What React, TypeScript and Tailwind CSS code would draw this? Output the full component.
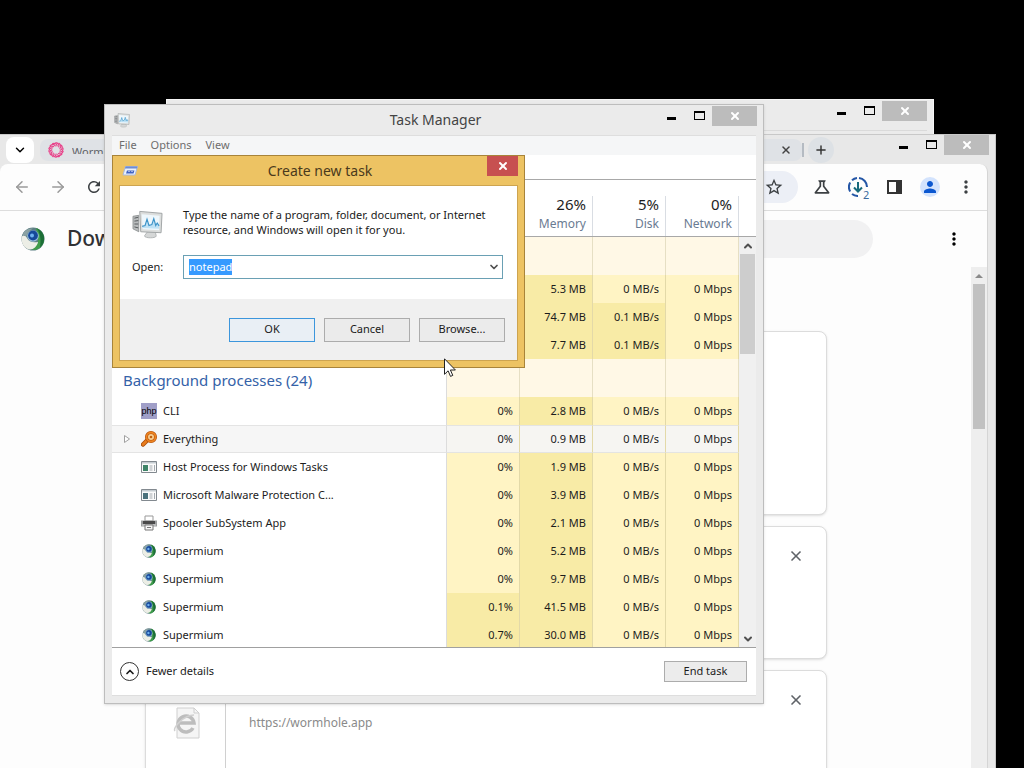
import React, { useEffect, useRef } from 'react';
import { ArrowLeft, ArrowRight, ChevronDown, ChevronUp, Plus, X } from 'lucide-react';
import { MdMoreVert, MdOutlineScience, MdPerson, MdRefresh, MdStarBorder } from 'react-icons/md';

type Row = {
  name: string;
  icon?: 'php' | 'everything' | 'host' | 'malware' | 'printer' | 'supermium';
  cpu: string;
  memory: string;
  disk: string;
  hovered?: boolean;
};

const appRows: Row[] = [
  { name: '', cpu: '', memory: '5.3 MB', disk: '0 MB/s' },
  { name: '', cpu: '', memory: '74.7 MB', disk: '0.1 MB/s' },
  { name: '', cpu: '', memory: '7.7 MB', disk: '0.1 MB/s' },
];

const backgroundRows: Row[] = [
  { name: 'CLI', icon: 'php', cpu: '0%', memory: '2.8 MB', disk: '0 MB/s' },
  { name: 'Everything', icon: 'everything', cpu: '0%', memory: '0.9 MB', disk: '0 MB/s', hovered: true },
  { name: 'Host Process for Windows Tasks', icon: 'host', cpu: '0%', memory: '1.9 MB', disk: '0 MB/s' },
  { name: 'Microsoft Malware Protection C...', icon: 'malware', cpu: '0%', memory: '3.9 MB', disk: '0 MB/s' },
  { name: 'Spooler SubSystem App', icon: 'printer', cpu: '0%', memory: '2.1 MB', disk: '0 MB/s' },
  { name: 'Supermium', icon: 'supermium', cpu: '0%', memory: '5.2 MB', disk: '0 MB/s' },
  { name: 'Supermium', icon: 'supermium', cpu: '0%', memory: '9.7 MB', disk: '0 MB/s' },
  { name: 'Supermium', icon: 'supermium', cpu: '0.1%', memory: '41.5 MB', disk: '0 MB/s' },
  { name: 'Supermium', icon: 'supermium', cpu: '0.7%', memory: '30.0 MB', disk: '0 MB/s' },
];

const SupermiumIcon = ({ className }: { className: string }) => (
  <svg viewBox="0 0 24 24" className={className}>
    <circle cx="12" cy="12" r="11.5" fill="#5d7f84" />
    <path d="M15 1a11.500 11.500 0 0 1 0 22c-3 0-5-1-6-2 6-1 9-5 8-10z" fill="#3f9c4b" />
    <path d="M16 1.500c5 2 8 7 7 12-.5 3-2 5-4 7 1-6 1-13-3-19z" fill="#1c6e36" />
    <path d="M.6 10C2 8 4 8 6 11c2 4 6 5 11 4-1 5-5 8-9 7.400C3 21 0 16 .6 10z" fill="#eceee6" />
    <path d="M3 5C6 2 9 1 12 1.500 9 3 6 6 5.500 9.500 4 8 2.500 8 1.500 8z" fill="#8aa1a3" />
    <circle cx="12" cy="9" r="5.800" fill="#9cc0dd" />
    <circle cx="12" cy="8.500" r="4.900" fill="#16489a" />
    <circle cx="11" cy="8.500" r="2" fill="#6fb1ef" />
  </svg>
);

const MonitorIcon = ({ className }: { className: string }) => (
  <svg viewBox="0 0 32 32" className={className}>
    <path d="M1 8l6-1v17l-6-3z" fill="#b9bcbd" stroke="#85898b" strokeWidth=".8" />
    <path d="M2.500 10l4-1M2.500 13l4-.5M2.500 16h4M2.500 19l4 1" stroke="#55595b" />
    <path d="M16 24h8l1 4c1 3-13 3-12 0z" fill="#d5d7d7" stroke="#a5a8a9" strokeWidth=".8" />
    <path d="M8 3l23 2-1 20-21-1z" fill="#dcdedd" stroke="#a0a4a5" />
    <path d="M10 6l18.500 1.500-.7 15L11 21.500z" fill="#eef7fc" />
    <path d="M10.500 19l3-1 2-7 2 7 3-1 2-6 2 7 1.500-3 2 3v3l-17-1z" fill="#bfe2f5" />
    <path d="M10.500 18.500l3-1 2-6.500 2 6.500 3-1 2-6 2 7 1.500-2.500 2 3" fill="none" stroke="#3b93c8" strokeWidth="1.200" />
  </svg>
);

const RunIcon = () => (
  <svg viewBox="0 0 16 12" className="h-3 w-4">
    <path d="M3.500 1.500h12l-2.500 8.500H1z" fill="#eaf1fb" stroke="#a9b9de" />
    <path d="M3.500 1.500h12l-.5 2h-12z" fill="#6e8cd2" />
    <path d="M5 5.500h7.500L11.500 8.500H4z" fill="#3f63c4" />
    <path d="M6.500 6.500h1M9.500 6.500h1" stroke="#fff" />
  </svg>
);

const WormholeIcon = () => (
  <svg viewBox="0 0 24 24" className="size-4 text-[#e8428a]">
    {Array.from({ length: 14 }, (_, i) => (
      <path
        key={i}
        d="M11 1q7 1 5 7"
        fill="none"
        stroke="currentColor"
        strokeWidth="1.800"
        transform={`rotate(${(i * 360) / 14} 12 12)`}
      />
    ))}
  </svg>
);

const ProcessIcon = ({ icon }: { icon: Row['icon'] }) => {
  if (icon === 'supermium') return <SupermiumIcon className="mx-px size-3.5" />;
  if (icon === 'php') {
    return (
      <span className="flex size-4 items-center justify-center bg-[#a09fc8] font-['Liberation_Sans',sans-serif] text-[9px] leading-none text-black">
        php
      </span>
    );
  }
  if (icon === 'everything') {
    return (
      <svg viewBox="0 0 16 16" className="size-4">
        <path d="M6 9.500L2 13.500" stroke="#a84c08" strokeWidth="4.500" strokeLinecap="round" />
        <path d="M6 9.500L2 13.500" stroke="#e87c1c" strokeWidth="2.600" strokeLinecap="round" />
        <circle cx="10" cy="6" r="4.500" fill="#f9cf92" stroke="#b04e0a" strokeWidth="3" />
        <circle cx="10" cy="6" r="4.500" fill="none" stroke="#ee8420" strokeWidth="1.800" />
        <circle cx="10" cy="6" r="1.300" fill="#c2600f" />
      </svg>
    );
  }
  if (icon === 'printer') {
    return (
      <svg viewBox="0 0 16 16" className="size-4">
        <path d="M4 1h8v5H4z" fill="#fff" stroke="#999" />
        <path d="M0 5.500h16v6H0z" fill="#9c9e9f" />
        <path d="M2 6h12v3H2z" fill="#4a4a4a" />
        <path d="M1 10h14" stroke="#d8d8d8" />
        <path d="M4 10h8v5H4z" fill="#f7f7f7" stroke="#777" />
        <path d="M6 12.500h4" stroke="#777" />
      </svg>
    );
  }
  return (
    <svg viewBox="0 0 16 16" className="size-4">
      <path d="M.5 2.500h15v11H.5z" fill="#fbfbfb" stroke="#82898f" />
      <path d="M1 3h14v1.500H1z" fill="#c5ccd1" />
      <path d="M2 6h5v6H2z" fill={icon === 'host' ? '#3f8468' : '#4b727c'} />
      <path d="M8.500 7h3M8.500 9h3M8.500 11h3M13.500 6v6" stroke="#a5abb0" />
    </svg>
  );
};

const WindowControls = () => (
  <div className="flex h-5 items-start">
    <button aria-label="Minimize" className="mr-[18px] flex h-3.5 w-[9px] items-end">
      <span className="h-[3px] w-full bg-black" />
    </button>
    <button aria-label="Maximize" className="mr-[7px] mt-[5px] h-[9px] w-[11px] border border-t-2 border-black" />
    <button
      aria-label="Close"
      className="flex h-5 w-[45px] items-center justify-center bg-[#bcbcbc] text-white"
    >
      <X className="size-3" strokeWidth={4} />
    </button>
  </div>
);

const BackWindow = () => (
  <div className="absolute left-[166px] right-[90px] top-[99px] flex h-[60px] flex-col border border-[#f6f6f6] bg-[#ebebeb] px-[6px] pt-px">
    <div className="flex h-[30px] justify-end border-b border-[#dadada]">
      <WindowControls />
    </div>
  </div>
);

const DownloadCard = ({ className, url, removable }: { className: string; url?: string; removable?: boolean }) => (
  <article className={`flex shrink-0 rounded-lg border border-[#dcdcdc] bg-white shadow ${className}`}>
    <div className="flex w-20 shrink-0 justify-center border-r border-[#d0d0d0] pt-[36px]">
      {url && (
        <svg viewBox="0 0 28 32" className="h-8 w-7">
          <path d="M5 1h17l5 5v25H5z" fill="#f5f5f5" stroke="#cfcfcf" />
          <path d="M22 1v5h5" fill="none" stroke="#cfcfcf" />
          <path d="M21 21a8 8 0 1 1 1-5H8" fill="none" stroke="#bdbdbd" strokeWidth="3.500" />
          <path d="M3 24c-3-3 9-16 19-16" fill="none" stroke="#d0d0d0" strokeWidth="1.500" />
        </svg>
      )}
    </div>
    <div className="min-w-0 flex-1 px-[23px] pt-[42px] text-xs leading-5 text-[#8a8a8a]">
      {url && <a href={url}>{url}</a>}
    </div>
    {removable && (
      <button aria-label="Remove from list" className="mr-[22px] mt-[21px] size-4 self-start text-[#5f6368]">
        <X className="size-4" strokeWidth={2.5} />
      </button>
    )}
  </article>
);

const BrowserWindow = () => (
  <div className="absolute bottom-0 left-0 right-[28px] top-[134px] flex flex-col overflow-hidden border-r border-t border-[#c8c8c8] bg-[#e8e8e8]">
    <div className="flex h-[29px] shrink-0 items-start pr-[6px]">
      <button
        aria-label="Search tabs"
        className="ml-1.5 mt-0.5 flex h-[26px] w-7 items-center justify-center rounded-lg bg-white"
      >
        <ChevronDown className="size-3.5" strokeWidth={2.5} />
      </button>
      <div className="ml-1.5 mt-1 flex h-[22px] flex-1 items-center rounded-lg bg-[#dfe2e6] pl-2 pr-2.5">
        <WormholeIcon />
        <span className="ml-2 h-[7px] overflow-hidden text-[11px] leading-[9px] text-[#5f6368]">Wormhole</span>
        <button aria-label="Close tab" className="ml-auto text-[#444]">
          <X className="size-3" strokeWidth={3} />
        </button>
      </div>
      <span className="mr-1 mt-2 h-3.5 border-l-2 border-[#b5bbc2]" />
      <button
        aria-label="New tab"
        className="mr-[65px] mt-0.5 flex size-[26px] items-center justify-center rounded-full bg-[#dde1e5] text-[#333]"
      >
        <Plus className="size-3.5" strokeWidth={2.5} />
      </button>
      <WindowControls />
    </div>

    <div className="mr-[7px] flex min-h-0 flex-1 flex-col rounded-t-lg border-r border-[#d5d5d5] bg-[#fdfdfd]">
      <nav className="flex h-[47px] shrink-0 items-center border-b border-[#dddddd] pl-[13px] pr-[11px] text-[#3c4043]">
        <button aria-label="Back" className="mr-[18px] text-[#9a9a9a]">
          <ArrowLeft className="size-[18px]" />
        </button>
        <button aria-label="Forward" className="mr-[18px] text-[#9a9a9a]">
          <ArrowRight className="size-[18px]" />
        </button>
        <button aria-label="Reload">
          <MdRefresh className="size-[18px]" />
        </button>
        <div className="ml-3 mr-2.5 flex h-8 flex-1 items-center justify-end rounded-full bg-[#eceff6] pr-3.5">
          <button aria-label="Bookmark this tab">
            <MdStarBorder className="size-5" />
          </button>
        </div>
        <div className="flex items-center gap-4">
          <button aria-label="Labs" className="ml-1">
            <MdOutlineScience className="size-5" />
          </button>
          <button aria-label="Downloads" className="relative">
            <svg viewBox="0 0 20 20" className="size-5" fill="none" stroke="#2456a6" strokeWidth="2">
              <path d="M10 19A9 9 0 0 1 4 17" />
              <path d="M2.200 14.500A9 9 0 0 1 2.200 5.500" />
              <path d="M4 3.300A9 9 0 0 1 9 1M11 1a9 9 0 0 1 8 9" />
              <path d="M10 5v9M6 10.500l4 4 4-4" stroke="#17697c" />
            </svg>
            <span className="absolute left-[14px] top-[12px] bg-[#fdfdfd] px-px text-[11px] leading-3 text-[#3c6a9e]">
              2
            </span>
          </button>
          <button aria-label="Side panel">
            <svg viewBox="0 0 20 20" className="size-5">
              <path d="M4 4h13v12H4z" fill="none" stroke="#333" strokeWidth="2" />
              <path d="M12 4h5v12h-5z" fill="#333" />
            </svg>
          </button>
          <button
            aria-label="Profile"
            className="flex size-5 items-center justify-center rounded-full bg-[#d3e3fd] text-[#0b57d0]"
          >
            <MdPerson className="size-[18px]" />
          </button>
          <button aria-label="Browser menu">
            <MdMoreVert className="size-5" />
          </button>
        </div>
      </nav>

      <div className="flex min-h-0 flex-1 flex-col">
        <header className="flex h-14 shrink-0 items-center pl-[21px] pr-[23px]">
          <SupermiumIcon className="size-6" />
          <h1 className="ml-[22px] text-[21px] font-medium text-[#303134]">Downloads</h1>
          <div className="ml-auto mr-[71px] h-[38px] w-[680px] max-w-[60%] rounded-full bg-[#f1f1f2]" />
          <button aria-label="More actions">
            <MdMoreVert className="size-5" />
          </button>
        </header>
        <div className="flex min-h-0 flex-1">
          <main className="flex min-w-0 flex-1 flex-col gap-[11px] overflow-hidden pl-[145px] pr-[144px] pt-16">
            <DownloadCard className="h-[184px]" />
            <DownloadCard className="h-[133px]" removable />
            <DownloadCard className="h-[133px]" url="https://wormhole.app" removable />
          </main>
          <div className="w-4 shrink-0 bg-[#eeeeee] px-0.5">
            <div className="flex h-[17px] items-center justify-center">
              <span className="border-x-4 border-b-4 border-x-transparent border-b-[#8a8a8a]" />
            </div>
            <div className="h-[145px] bg-[#c1c1c1]" />
          </div>
        </div>
      </div>
    </div>
  </div>
);

const HeaderCell = ({ value, label }: { value?: string; label?: string }) => (
  <th className="h-[57px] border-b border-[#a8a8a8] p-0 align-bottom font-normal">
    <div className="h-10 border-r border-[#d9dde3] pr-1.5 text-right">
      <span className="block h-5 text-[15px] leading-4 text-[#1e1e1e]">{value}</span>
      <span className="block text-xs leading-4 text-[#6a7b92]">{label}</span>
    </div>
  </th>
);

const GroupRow = ({ label }: { label: string }) => (
  <tr className="h-[38px]">
    <td className="border-r border-[#dcdcdc] p-0 pl-[11px] pt-1 text-[15px] text-[#3462a8]">{label}</td>
    {[0, 1, 2, 3].map((col) => (
      <td key={col} className="border-r border-[#e6dfc4] bg-[#fff8e6]" />
    ))}
  </tr>
);

const ProcessRow = ({ row }: { row: Row }) => {
  const light = 'bg-[#fff4c4]';
  const dark = 'bg-[#f8eba6]';
  const tint = (busy: boolean) => (row.hovered ? 'border-y border-y-[#e4e4e2] bg-[#f6f5f2]' : busy ? dark : light);
  const cell = 'border-r border-r-[#e3d9a8] p-0 pr-1.5 text-right';

  return (
    <tr className="h-7">
      <td
        className={`border-r border-r-[#dcdcdc] p-0 ${row.hovered ? 'border-y border-y-[#e4e4e4] bg-[#f6f6f6]' : ''}`}
      >
        <div className="flex items-center">
          <span className="flex w-[29px] shrink-0 justify-center">
            {row.hovered && (
              <svg viewBox="0 0 6 8" className="h-2 w-1.5">
                <path d="M.5.5v7l5-3.500z" fill="#fff" stroke="#a0a0a0" />
              </svg>
            )}
          </span>
          {row.icon && <ProcessIcon icon={row.icon} />}
          <span className="ml-1.5 whitespace-nowrap">{row.name}</span>
        </div>
      </td>
      <td className={`${cell} ${tint(row.cpu.length > 2)}`}>{row.cpu}</td>
      <td className={`${cell} ${tint(true)}`}>{row.memory}</td>
      <td className={`${cell} ${tint(row.disk !== '0 MB/s')}`}>{row.disk}</td>
      <td className={`${cell} ${tint(false)}`}>0 Mbps</td>
    </tr>
  );
};

const TaskManager = () => (
  <div className="absolute left-[104px] top-[104px] flex h-[600px] w-[660px] flex-col border border-[#bdbdbd] bg-[#ebebeb] px-[7px] pb-[7px] shadow-sm">
    <div className="-mr-px flex h-[30px] shrink-0">
      <div className="flex flex-1 items-center pl-0.5">
        <MonitorIcon className="size-4" />
      </div>
      <h2 className="self-center text-[14px] leading-4 text-[#444]">Task Manager</h2>
      <div className="flex flex-1 justify-end pt-px">
        <WindowControls />
      </div>
    </div>

    <div className="flex min-h-0 flex-1 flex-col border-y border-[#dedede] bg-white text-[11px] text-[#1c1c1c]">
      <div className="flex h-[19px] shrink-0 items-center gap-3.5 bg-[#f5f6f7] pl-[7px] text-[#6d6d6d]">
        <button>File</button>
        <button>Options</button>
        <button>View</button>
      </div>
      <div className="h-[25px] shrink-0 border-b border-[#a8a8a8]" />

      <div className="flex min-h-0 flex-1 overflow-hidden">
        <div className="min-w-0 flex-1">
          <table className="w-full table-fixed border-separate border-spacing-0">
            <colgroup>
              <col />
              <col className="w-[73px]" />
              <col className="w-[73px]" />
              <col className="w-[73px]" />
              <col className="w-[73px]" />
            </colgroup>
            <thead>
              <tr>
                <HeaderCell />
                <HeaderCell />
                <HeaderCell value="26%" label="Memory" />
                <HeaderCell value="5%" label="Disk" />
                <HeaderCell value="0%" label="Network" />
              </tr>
            </thead>
            <tbody>
              <GroupRow label="" />
              {appRows.map((row, idx) => (
                <ProcessRow key={idx} row={row} />
              ))}
              <GroupRow label="Background processes (24)" />
              {backgroundRows.map((row, idx) => (
                <ProcessRow key={idx} row={row} />
              ))}
            </tbody>
          </table>
        </div>
        <div className="flex w-[17px] shrink-0 flex-col bg-[#f0f0f0]">
          <div className="h-[57px] shrink-0 border-b border-[#a8a8a8] bg-white" />
          <button aria-label="Scroll up" className="flex h-[17px] items-center justify-center">
            <ChevronUp className="size-3 text-[#505050]" strokeWidth={4} />
          </button>
          <div className="mx-px h-[100px] bg-[#cdcdcd]" />
          <button aria-label="Scroll down" className="mt-auto flex h-[17px] items-center justify-center">
            <ChevronDown className="size-3 text-[#505050]" strokeWidth={4} />
          </button>
        </div>
      </div>

      <div className="flex h-12 shrink-0 items-center justify-between border-t border-[#a0a0a0] pl-2 pr-[9px]">
        <button className="flex items-center gap-[7px]">
          <span className="flex size-[19px] items-center justify-center rounded-full border border-[#333]">
            <ChevronUp className="size-3" strokeWidth={3.5} />
          </span>
          Fewer details
        </button>
        <button className="h-[21px] w-[83px] border border-[#acacac] bg-[#ececec]">End task</button>
      </div>
    </div>
  </div>
);

const RunDialog = () => {
  const inputRef = useRef<HTMLInputElement>(null);

  useEffect(() => {
    inputRef.current?.focus();
    inputRef.current?.select();
  }, []);

  return (
    <div
      role="dialog"
      aria-labelledby="run-title"
      className="absolute left-[112px] top-[155px] flex h-[213px] w-[413px] flex-col border border-[#a8843a] bg-[#edc363] px-[6px] pb-[6px] text-[11px] text-[#1a1a1a]"
    >
      <div className="flex h-[29px] shrink-0">
        <div className="flex flex-1 items-center pl-[3px]">
          <RunIcon />
        </div>
        <h2 id="run-title" className="self-center text-[14px] leading-4 text-[#4a3a1c]">
          Create new task
        </h2>
        <div className="flex flex-1 justify-end">
          <button aria-label="Close" className="flex h-5 w-[31px] items-center justify-center bg-[#c75050] text-white">
            <X className="size-3" strokeWidth={4} />
          </button>
        </div>
      </div>

      <div className="flex flex-1 flex-col border border-[#cda450] bg-white">
        <div className="flex-1 pl-3 pr-3.5">
          <div className="flex gap-5 pt-[21px]">
            <MonitorIcon className="mt-px h-8 w-[31px] shrink-0" />
            <p className="whitespace-nowrap leading-[15px]">
              Type the name of a program, folder, document, or Internet
              <br />
              resource, and Windows will open it for you.
            </p>
          </div>
          <div className="mt-[15px] flex items-center">
            <label htmlFor="run-open" className="w-[51px]">
              Open:
            </label>
            <div className="flex h-6 flex-1 items-center border border-[#6aa0b4]">
              <input
                id="run-open"
                ref={inputRef}
                defaultValue="notepad"
                className="min-w-0 flex-1 px-[5px] outline-none selection:bg-[#3399ff]/99 selection:text-white"
              />
              <button aria-label="Show recent" className="flex w-4 justify-center">
                <ChevronDown className="size-3 text-[#505050]" strokeWidth={3.5} />
              </button>
            </div>
          </div>
        </div>
        <div className="flex h-[61px] items-center justify-end gap-[9px] bg-[#f0f0f0] pr-3">
          <button className="h-6 w-[86px] border border-[#3c96dc] bg-[#e9eff5]">OK</button>
          <button className="h-6 w-[86px] border border-[#acacac] bg-[#ebebeb]">Cancel</button>
          <button className="h-6 w-[86px] border border-[#acacac] bg-[#ebebeb]">Browse...</button>
        </div>
      </div>
    </div>
  );
};

export default function App() {
  return (
    <div className="relative h-screen w-full overflow-hidden bg-black font-['Noto_Sans','Open_Sans',sans-serif]">
      <BackWindow />
      <BrowserWindow />
      <TaskManager />
      <RunDialog />
      <svg viewBox="0 0 12 19" className="absolute left-[444px] top-[358px] h-[19px] w-3">
        <path
          d="M.5.8v15.500l3.600-3.500 2.400 5.600 2.300-1-2.400-5.400h5z"
          fill="#fff"
          stroke="#222"
          strokeLinejoin="round"
        />
      </svg>
    </div>
  );
}
